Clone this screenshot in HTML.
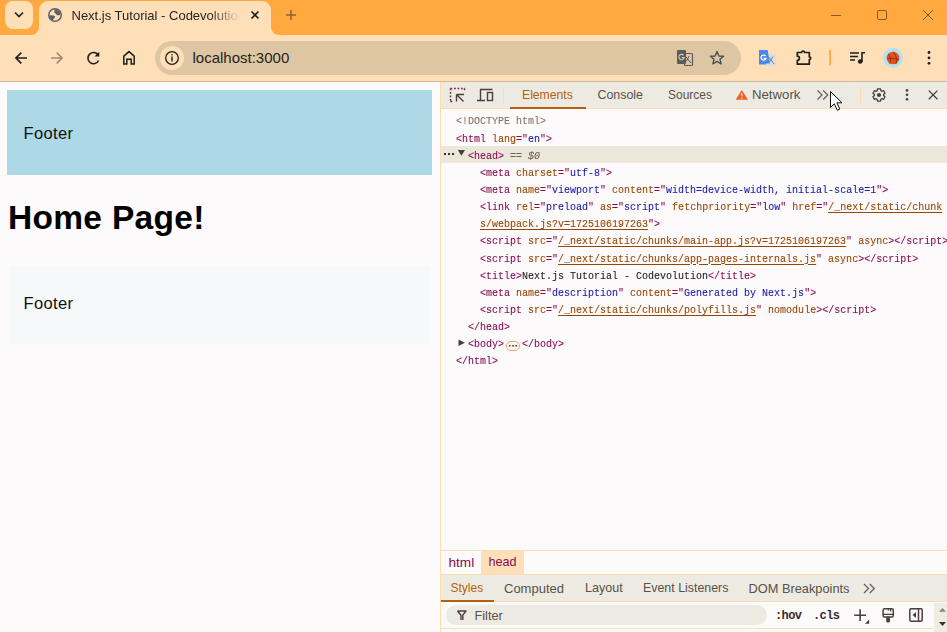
<!DOCTYPE html>
<html><head><meta charset="utf-8">
<style>
*{margin:0;padding:0;box-sizing:border-box}
html,body{width:947px;height:632px;overflow:hidden;background:#fcfafb;font-family:"Liberation Sans",sans-serif}
.a{position:absolute}
svg{position:absolute;overflow:visible}
#frame{left:0;top:0;width:947px;height:35px;background:#ffa940}
#chev{left:5px;top:1px;width:28px;height:28px;border-radius:8px;background:#ffdfb8}
#tab{left:39px;top:1px;width:232px;height:34px;background:#ffdfb8;border-radius:9px 9px 0 0}
.corner{width:8px;height:8px;top:27px;background:#ffdfb8}
.corner::after{content:"";position:absolute;left:0;top:0;width:8px;height:8px;background:#ffa940}
#cl{left:31px}
#cl::after{border-bottom-right-radius:8px}
#cr{left:271px}
#cr::after{border-bottom-left-radius:8px}
#title{left:71.5px;top:8px;font-size:13px;color:#262626;white-space:nowrap;width:170px;overflow:hidden;
 -webkit-mask-image:linear-gradient(90deg,#000 0,#000 138px,transparent 168px)}
#toolbar{left:0;top:35px;width:947px;height:46px;background:#ffdfb8}
#tbborder{left:0;top:81px;width:947px;height:1px;background:#d7b894}
#omni{left:155px;top:41px;width:586px;height:34px;border-radius:17px;background:#dfc6a2}
#infobg{left:160px;top:46px;width:24px;height:24px;border-radius:12px;background:#ffdfb8}
#url{left:192.5px;top:49px;font-size:15px;color:#1f1f1f}
/* page */
#box1{left:7px;top:90px;width:425px;height:85px;background:#add8e6}
.foot{font-size:16.5px;letter-spacing:0.35px;color:#111}
#f1{left:23.5px;top:124px}
#h1{left:8px;top:199px;font-size:33.5px;font-weight:bold;letter-spacing:0.3px;color:#000}
#box2{left:9px;top:266px;width:421px;height:78px;background:#f6f8f9}
#f2{left:23.5px;top:294px}
/* devtools */
#dv{left:440px;top:82px;width:507px;height:550px;background:#fcfafb;border-left:1px solid #ffdcb0}
#dtb{left:441px;top:82px;width:506px;height:26px;background:#edebe1}
#dtbb{left:441px;top:108px;width:506px;height:1px;background:#ffdcb0}
.sep{width:1px;background:#ffd9a8}
.tabt{font-size:12.5px;color:#5b4f48;top:87.5px;white-space:nowrap}
#ul{left:510px;top:107px;width:76px;height:2px;background:#b6600f;z-index:2}
.code{font-family:"Liberation Mono",monospace;font-size:11.5px;white-space:pre;line-height:17.14px;transform:scaleX(0.8696);transform-origin:0 0;-webkit-text-stroke:0.1px currentColor}
#tree{left:455.5px;top:112.4px;color:#8a0c52}
#selrow{left:441px;top:146px;width:506px;height:17px;background:#ebe7da}
.dt{color:#857565}
.an{color:#994500}
.av{color:#1a1aa6}
.lk{color:#994500;text-decoration:underline;text-underline-offset:1.5px}
.gr{color:#6f6250;font-style:italic}
#brb1{left:441px;top:550px;width:506px;height:1px;background:#ffdcb0}
#brb2{left:441px;top:574px;width:506px;height:1px;background:#ffdcb0}
#headbg{left:481px;top:551px;width:43px;height:23px;background:#ffdfb8}
.crumb{font-size:13px;color:#8a0c52;top:554px}
#stb{left:441px;top:575px;width:506px;height:26px;background:#edebe1}
#stbb{left:441px;top:601px;width:506px;height:1px;background:#ffdcb0}
#sul{left:441px;top:600px;width:53px;height:2px;background:#b6600f;z-index:2}
.stt{font-size:12.5px;color:#5b4f48;top:580.5px;white-space:nowrap}
#pill{left:446px;top:605px;width:321px;height:20px;border-radius:10px;background:#edebe1}
#fbb{left:441px;top:628px;width:493px;height:1px;background:#ffdcb0}
.bm{font-family:"Liberation Mono",monospace;font-weight:bold;font-size:12px;color:#3a2a30;top:609px;letter-spacing:-0.6px}
</style></head><body>
<div id="frame" class="a"></div>
<div id="chev" class="a"></div>
<svg style="left:0;top:0" width="1" height="1"><path d="M15 12.5 L19 16.5 L23 12.5" fill="none" stroke="#1f1f1f" stroke-width="1.6"/></svg>
<div id="tab" class="a"></div>
<div id="cl" class="a corner"></div>
<div id="cr" class="a corner"></div>
<svg style="left:0;top:0" width="1" height="1">
 <circle cx="55" cy="15" r="7" fill="#5b6068"/>
 <circle cx="55" cy="15" r="5.5" fill="#ffdfb8"/>
 <path d="M55 9.4 C57 9.3 60 10.8 60.6 14 C59.5 15.5 58 15.8 57 15 C56.2 14 55.8 13.2 54.6 12.9 C54 12 54.2 10.5 55 9.4Z" fill="#5b6068"/>
 <path d="M49.4 15.6 C51 15.2 53.5 15.1 54.9 16.2 C55.4 17 54.9 17.9 53.9 18.4 C53.3 19 53.2 20 53.1 20.6 C51 20 49.7 18 49.4 15.6Z" fill="#5b6068"/>
</svg>
<div id="title" class="a">Next.js Tutorial - Codevolution</div>
<svg style="left:0;top:0" width="1" height="1">
 <path d="M251.5 11.5 L258.5 18.5 M258.5 11.5 L251.5 18.5" stroke="#1c1c1c" stroke-width="1.6"/>
 <path d="M291 10 V20 M286 15 H296" stroke="#8a6530" stroke-width="1.5"/>
 <path d="M831 15.5 H841" stroke="#7f5a25" stroke-width="1"/>
 <rect x="877.5" y="10.5" width="9" height="9" rx="1.2" fill="none" stroke="#7f5a25" stroke-width="1"/>
 <path d="M923 10 L933 20 M933 10 L923 20" stroke="#7f5a25" stroke-width="1"/>
</svg>
<div id="toolbar" class="a"></div>
<div id="tbborder" class="a"></div>
<svg style="left:0;top:0" width="1" height="1">
 <path d="M16 58 H27 M21.3 52.6 L15.9 58 L21.3 63.4" fill="none" stroke="#1f1f1f" stroke-width="1.6"/>
 <path d="M51 58 H62 M56.7 52.6 L62.1 58 L56.7 63.4" fill="none" stroke="#9a8a72" stroke-width="1.5"/>
 <path d="M98.2 55 A5.6 5.6 0 1 0 98.6 60.5" fill="none" stroke="#1f1f1f" stroke-width="1.6"/>
 <path d="M99.3 51.8 V56.6 H94.5 Z" fill="#1f1f1f"/>
 <path d="M123.8 64 V56.2 L129 51.6 L134.2 56.2 V64 H131.2 V59.2 H126.8 V64 Z" fill="none" stroke="#1f1f1f" stroke-width="1.5" stroke-linejoin="miter"/>
</svg>
<div id="omni" class="a"></div>
<div id="infobg" class="a"></div>
<svg style="left:0;top:0" width="1" height="1">
 <circle cx="172" cy="58" r="6.3" fill="none" stroke="#1f1f1f" stroke-width="1.3"/>
 <path d="M172 56.5 V61.5" stroke="#1f1f1f" stroke-width="1.4"/>
 <circle cx="172" cy="54.7" r="0.8" fill="#1f1f1f"/>
</svg>
<div id="url" class="a">localhost:3000</div>
<svg style="left:0;top:0" width="1" height="1">
 <!-- translate icon -->
 <rect x="677" y="50" width="9" height="14" rx="1" fill="#575b62"/>
 <rect x="684.5" y="53.5" width="8" height="12" rx="1" fill="none" stroke="#575b62" stroke-width="1.2"/>
 <path d="M683.6 55.3 A2.7 2.7 0 1 0 684.2 57.6 H681.6" fill="none" stroke="#dfc6a2" stroke-width="1.1"/>
 <path d="M686 57 L691 63 M689 56 L686.5 61" stroke="#575b62" stroke-width="1"/>
 <!-- star -->
 <path d="M717 51.5 L718.9 56 L723.6 56.3 L720 59.3 L721.1 64 L717 61.4 L712.9 64 L714 59.3 L710.4 56.3 L715.1 56 Z" fill="none" stroke="#4b4f56" stroke-width="1.4" stroke-linejoin="round"/>
 <!-- google translate ext -->
 <path d="M759 50 H767.5 L770.5 66 L766 64.5 H759 Z" fill="#4a88e8"/>
 <rect x="766" y="54" width="9.5" height="12" fill="#dcdde0"/>
 <path d="M759 50 H767.5 L770 63.5 H759 Z" fill="#4a88e8"/>
 <path d="M765.6 56 A2.5 2.5 0 1 0 766 58.3 H763.8" fill="none" stroke="#fff" stroke-width="1.3"/>
 <path d="M769 57 L774 64 M773 56.5 L769.5 62" stroke="#6a8a80" stroke-width="1"/>
 <!-- puzzle -->
 <path d="M797.3 52.5 H801.6 A1.5 1.5 0 0 1 804.6 52.5 H809.3 V56.8 A1.4 1.4 0 0 1 809.3 59.6 V64.2 H797.3 V60.4 A2.1 2.1 0 0 0 797.3 56.2 Z" fill="none" stroke="#1f1f1f" stroke-width="1.7" stroke-linejoin="round"/>
 <rect x="829.2" y="50" width="1.8" height="15.5" fill="#ffa940"/>
 <!-- media -->
 <path d="M850 53 H859 M850 56.5 H858 M850 60 H855" stroke="#1f1f1f" stroke-width="1.5"/>
 <path d="M862 62 V52.8 H865" fill="none" stroke="#1f1f1f" stroke-width="1.6"/>
 <circle cx="860.2" cy="61.5" r="2.3" fill="#1f1f1f"/>
 <!-- avatar -->
 <circle cx="893" cy="57.8" r="10" fill="#b3e1ef"/>
 <circle cx="893" cy="58" r="6.3" fill="#e8521a"/>
 <path d="M888 54 C891 56 891 61 889.5 63.5 M893 51.8 C896 54 897 59 896 64 M887 59 C890 58 895 58 899 60" fill="none" stroke="#6a2a10" stroke-width="0.7"/>
 <!-- menu -->
 <circle cx="929" cy="52.5" r="1.4" fill="#1f1f1f"/>
 <circle cx="929" cy="57.9" r="1.4" fill="#1f1f1f"/>
 <circle cx="929" cy="63.3" r="1.4" fill="#1f1f1f"/>
</svg>

<div id="box1" class="a"></div>
<div id="f1" class="a foot">Footer</div>
<div id="h1" class="a">Home Page!</div>
<div id="box2" class="a"></div>
<div id="f2" class="a foot">Footer</div>

<div id="dv" class="a"></div>
<div id="dtb" class="a"></div>
<div id="dtbb" class="a"></div>
<svg style="left:0;top:0" width="1" height="1">
 <path d="M450.5 88.5 H465 M450.5 88.5 V102 M464.5 88.5 V92 M450.5 101.5 H454" fill="none" stroke="#6a2a44" stroke-width="1.5" stroke-dasharray="1.7 1.8"/>
 <path d="M456.5 94.5 H464 M456.5 94.5 V101.5 M456.8 94.8 L463.5 101.5" fill="none" stroke="#4a3f3a" stroke-width="1.4"/>
 <path d="M480.5 100 V89.5 H492.5 M477 100.5 H485" fill="none" stroke="#4a3f3a" stroke-width="1.4"/>
 <rect x="487.5" y="92.5" width="5" height="8" fill="none" stroke="#4a3f3a" stroke-width="1.4"/>
</svg>
<div class="a sep" style="left:503px;top:87px;height:16px"></div>
<div class="a tabt" style="left:522px;font-size:12.2px;color:#b6600f">Elements</div>
<div class="a tabt" style="left:597.5px;font-size:12.4px">Console</div>
<div class="a tabt" style="left:668px;font-size:12px">Sources</div>
<svg style="left:0;top:0" width="1" height="1">
 <path d="M741.8 90 L748 99.8 H735.6 Z" fill="#e8642a"/>
 <path d="M741.8 93 V96.3 M741.8 97.5 V98.6" stroke="#fff" stroke-width="1"/>
</svg>
<div class="a tabt" style="left:752px;top:87px;font-size:13.2px">Network</div>
<svg style="left:0;top:0" width="1" height="1">
 <path d="M817.5 90.5 L822 95 L817.5 99.5 M823.2 90.5 L827.7 95 L823.2 99.5" fill="none" stroke="#6a5f58" stroke-width="1.3"/>
</svg>
<div class="a sep" style="left:860px;top:87px;height:16px"></div>
<svg style="left:0;top:0" width="1" height="1">
 <path d="M877.13 90.80 L877.48 88.89 L880.52 88.89 L880.87 90.80 L881.70 91.28 L883.53 90.62 L885.06 93.26 L883.57 94.52 L883.57 95.48 L885.06 96.74 L883.53 99.38 L881.70 98.72 L880.87 99.20 L880.52 101.11 L877.48 101.11 L877.13 99.20 L876.30 98.72 L874.47 99.38 L872.94 96.74 L874.43 95.48 L874.43 94.52 L872.94 93.26 L874.47 90.62 L876.30 91.28 Z" fill="none" stroke="#4a3f3a" stroke-width="1.3" stroke-linejoin="round"/>
 <circle cx="879" cy="95" r="2.1" fill="#4a3f3a"/>
 <circle cx="907" cy="90.4" r="1.3" fill="#4a3f3a"/>
 <circle cx="907" cy="94.8" r="1.3" fill="#4a3f3a"/>
 <circle cx="907" cy="99.2" r="1.3" fill="#4a3f3a"/>
 <path d="M928.8 90.6 L937.4 99.2 M937.4 90.6 L928.8 99.2" stroke="#4a3f3a" stroke-width="1.3"/>
</svg>
<div id="ul" class="a"></div>

<div id="selrow" class="a"></div>
<svg style="left:0;top:0" width="1" height="1">
 <rect x="444" y="153" width="2" height="2" fill="#3a302a"/>
 <rect x="448" y="153" width="2" height="2" fill="#3a302a"/>
 <rect x="452" y="153" width="2" height="2" fill="#3a302a"/>
 <path d="M457.8 150 H465 L461.4 155.8 Z" fill="#4a3f38"/>
 <path d="M458.5 339.5 L464.9 342.8 L458.5 346.1 Z" fill="#4a3f38"/>
 <rect x="506.5" y="341.5" width="13" height="9" rx="4.5" fill="none" stroke="#f5a55a" stroke-width="1"/>
 <rect x="509" y="345" width="1.6" height="1.6" fill="#5a4030"/>
 <rect x="512.2" y="345" width="1.6" height="1.6" fill="#5a4030"/>
 <rect x="515.4" y="345" width="1.6" height="1.6" fill="#5a4030"/>
</svg>
<div id="tree" class="a code"><span class="dt">&lt;!DOCTYPE html&gt;</span>
&lt;html <span class="an">lang</span>="<span class="av">en</span>"&gt;
  &lt;head&gt; <span class="gr">== $0</span>
    &lt;meta <span class="an">charset</span>="<span class="av">utf-8</span>"&gt;
    &lt;meta <span class="an">name</span>="<span class="av">viewport</span>" <span class="an">content</span>="<span class="av">width=device-width, initial-scale=1</span>"&gt;
    &lt;link <span class="an">rel</span>="<span class="av">preload</span>" <span class="an">as</span>="<span class="av">script</span>" <span class="an">fetchpriority</span>="<span class="av">low</span>" <span class="an">href</span>="<span class="lk">/_next/static/chunk</span>
    <span class="lk">s/webpack.js?v=1725106197263</span>"&gt;
    &lt;script <span class="an">src</span>="<span class="lk">/_next/static/chunks/main-app.js?v=1725106197263</span>" <span class="an">async</span>&gt;&lt;/script&gt;
    &lt;script <span class="an">src</span>="<span class="lk">/_next/static/chunks/app-pages-internals.js</span>" <span class="an">async</span>&gt;&lt;/script&gt;
    &lt;title&gt;<span style="color:#222">Next.js Tutorial - Codevolution</span>&lt;/title&gt;
    &lt;meta <span class="an">name</span>="<span class="av">description</span>" <span class="an">content</span>="<span class="av">Generated by Next.js</span>"&gt;
    &lt;script <span class="an">src</span>="<span class="lk">/_next/static/chunks/polyfills.js</span>" <span class="an">nomodule</span>&gt;&lt;/script&gt;
  &lt;/head&gt;
  &lt;body&gt;   &lt;/body&gt;
&lt;/html&gt;</div>

<div id="brb1" class="a"></div>
<div id="headbg" class="a"></div>
<div class="a crumb" style="left:448.5px;top:554.5px;font-size:13.6px">html</div>
<div class="a crumb" style="left:488.5px;top:554.5px;font-size:12.6px">head</div>
<div id="brb2" class="a"></div>
<div id="stb" class="a"></div>
<div id="sul" class="a"></div>
<div id="stbb" class="a"></div>
<div class="a stt" style="left:450.5px;font-size:12px;color:#b6600f">Styles</div>
<div class="a stt" style="left:504px;font-size:13px">Computed</div>
<div class="a stt" style="left:585px;font-size:12.6px">Layout</div>
<div class="a stt" style="left:643px;font-size:12.4px">Event Listeners</div>
<div class="a stt" style="left:748.5px;font-size:12.8px">DOM Breakpoints</div>
<svg style="left:0;top:0" width="1" height="1">
 <path d="M864 584 L868.5 588.5 L864 593 M869.8 584 L874.3 588.5 L869.8 593" fill="none" stroke="#6a5f58" stroke-width="1.3"/>
</svg>
<div class="a" style="left:934px;top:603px;width:13px;height:29px;background:#eeede4"></div>
<div id="pill" class="a"></div>
<svg style="left:0;top:0" width="1" height="1">
 <path d="M457.5 611 H466 L462.8 615.2 V620 M461 620 V615.2 L457.5 611" fill="none" stroke="#4a3f3a" stroke-width="1.4" stroke-linejoin="round"/>
</svg>
<div class="a stt" style="left:474.5px;top:608.5px;font-size:12.7px">Filter</div>
<div class="a bm" style="left:775px">:hov</div>
<div class="a bm" style="left:813px">.cls</div>
<svg style="left:0;top:0" width="1" height="1">
 <path d="M854.2 615.2 H866 M860.1 609.2 V621" stroke="#4a3f3a" stroke-width="1.6"/>
 <path d="M869.2 619.4 V623.7 H864.9 Z" fill="#4a3f3a"/>
 <rect x="883.1" y="608.7" width="10.2" height="8.2" rx="1.5" fill="none" stroke="#4a3f3a" stroke-width="1.5"/>
 <path d="M883 614.3 H893.5 M888.3 608.5 V610.6 M890.6 608.5 V611.6" stroke="#4a3f3a" stroke-width="1.3"/>
 <rect x="886.2" y="616.8" width="3.8" height="5.8" rx="1.6" fill="#4a3f3a"/>
 <rect x="909.8" y="608.8" width="12.4" height="12.4" rx="1.3" fill="none" stroke="#4a3f3a" stroke-width="1.5"/>
 <path d="M918.5 609 V621" stroke="#4a3f3a" stroke-width="1.5"/>
 <path d="M916 612 V618 L912.5 615 Z" fill="#4a3f3a"/>
 <path d="M939 611.8 L942.5 608 L946 611.8 Z" fill="#8a8580"/>
 <path d="M939 622 L942.5 626 L946 622 Z" fill="#333"/>
</svg>
<div id="fbb" class="a"></div>
<svg style="left:0;top:0;z-index:5" width="1" height="1">
 <path d="M830.5 91.5 V107.5 L834.3 103.8 L837.3 110.2 L839.8 109.1 L836.9 102.8 L842 102.8 Z" fill="#fff" stroke="#111" stroke-width="1" stroke-linejoin="miter"/>
</svg>
</body></html>
